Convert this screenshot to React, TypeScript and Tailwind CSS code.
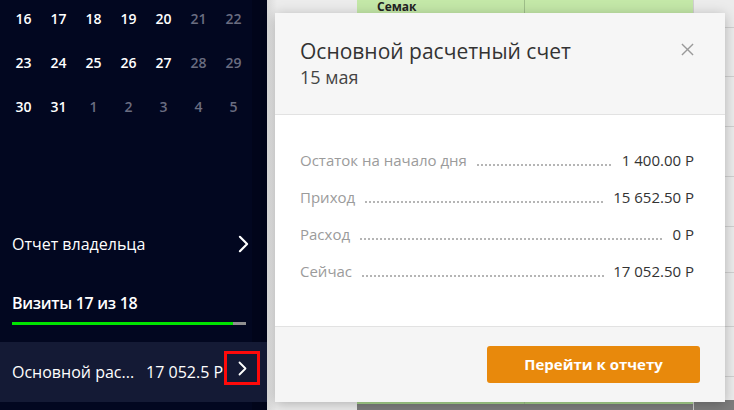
import React from "react";

const font = { fontFamily: '"Open Sans", "Noto Sans", sans-serif' };

const weeks: { d: number; muted?: boolean }[][] = [
  [{ d: 16 }, { d: 17 }, { d: 18 }, { d: 19 }, { d: 20 }, { d: 21, muted: true }, { d: 22, muted: true }],
  [{ d: 23 }, { d: 24 }, { d: 25 }, { d: 26 }, { d: 27 }, { d: 28, muted: true }, { d: 29, muted: true }],
  [{ d: 30 }, { d: 31 }, { d: 1, muted: true }, { d: 2, muted: true }, { d: 3, muted: true }, { d: 4, muted: true }, { d: 5, muted: true }],
];

const rows = [
  { label: "Остаток на начало дня", value: "1 400.00 Р" },
  { label: "Приход", value: "15 652.50 Р" },
  { label: "Расход", value: "0 Р" },
  { label: "Сейчас", value: "17 052.50 Р" },
];

const Chevron = ({ className }: { className?: string }) => (
  <svg viewBox="0 0 12 20" className={className} fill="none" stroke="currentColor" strokeWidth="2.4" strokeLinecap="round" strokeLinejoin="round">
    <path d="M2 2l8 8-8 8" />
  </svg>
);

const Sidebar = () => (
  <div className="w-[267px] h-full bg-[#020720] flex flex-col text-white relative">
    <div className="absolute right-0 top-0 bottom-0 w-[15px] bg-[#01051a]" />
    <div className="flex flex-col pt-[8px] pl-[6px]">
      {weeks.map((w, i) => (
        <div key={i} className="flex h-[44px]">
          {w.map((c, j) => (
            <div
              key={j}
              className={
                "w-[35px] text-center text-[14px] font-semibold leading-[22px] " +
                (c.muted ? "text-[#6a6d80]" : "text-white")
              }
            >
              {c.d}
            </div>
          ))}
        </div>
      ))}
    </div>

    <div className="flex-1" />

    <div className="flex items-center justify-between pl-[12px] pr-[18px] h-[40px] mb-[28px]">
      <span className="text-[16px] font-medium">Отчет владельца</span>
      <Chevron className="w-[11px] h-[18px]" />
    </div>

    <div className="pl-[12px] pr-[20px]">
      <div className="text-[16px] font-semibold leading-[22px] tracking-[-0.3px]">Визиты 17 из 18</div>
      <div className="flex h-[3px] mt-[8px] w-[234px]">
        <div className="w-[221px] bg-[#00e400]" />
        <div className="flex-1 bg-[#8f8f8f]" />
      </div>
    </div>

    <div className="mt-[17px] h-[60px] bg-[#141a35] flex items-center pl-[12px] mb-[8px] relative z-10">
      <span className="text-[16px] font-medium whitespace-nowrap">Основной рас...</span>
      <span className="text-[16px] font-medium whitespace-nowrap ml-[12px] w-[78px] overflow-hidden">17 052.5 Р</span>
      <div className="w-[36px] h-[34px] -mt-[8px] border-[3px] border-[#ff0a0a] flex items-center justify-center shrink-0">
        <Chevron className="w-[9px] h-[15px]" />
      </div>
    </div>
  </div>
);

const Background = () => (
  <div className="flex-1 h-full bg-[#ececec] relative overflow-hidden">
    <div className="absolute inset-y-0 left-0 w-[10px] bg-gradient-to-r from-[#d9d9d9] to-transparent" />
    <div className="ml-[90px] flex h-full">
      <div className="w-[336px] flex flex-col">
        <div className="h-[28px] bg-[#c4e8a8] border-b border-[#b3d29a] flex text-[12px] font-bold text-[#222] leading-[13px]">
          <div className="w-[168px] border-r border-[#9fbf8a] pl-[20px]">
            Семак
            <br />
            Сергей
          </div>
          <div className="flex-1" />
        </div>
        <div className="flex-1 flex">
          <div className="w-[168px] border-r border-[#d5d5d5] bg-[#f4f4f4]" />
          <div className="flex-1 bg-[#f4f4f4]" />
        </div>
        <div className="h-[4px] bg-[#a9d58e] flex">
          <div className="w-[168px] border-r border-[#9fbf8a]" />
        </div>
        <div className="h-[6px] bg-[#7d7d7d]" />
      </div>
      <div className="flex-1 flex flex-col bg-[#ececec] border-l border-[#d0d0d0]">
        <div className="h-[28px] border-b border-[#d0d0d0]" />
        <div className="h-[49px] border-b border-[#d0d0d0]" />
        <div className="h-[50px] border-b border-[#d0d0d0]" />
        <div className="h-[50px] border-b border-[#d0d0d0]" />
        <div className="h-[50px] border-b border-[#d0d0d0]" />
        <div className="h-[46px] border-b border-[#d0d0d0]" />
        <div className="h-[54px] border-b border-[#d0d0d0]" />
        <div className="h-[50px] border-b border-[#d0d0d0]" />
        <div className="flex-1 bg-[#7d7d7d] mt-[23px]" />
      </div>
    </div>
  </div>
);

const Modal = () => (
  <div className="absolute left-[275px] top-[13px] w-[450px] h-[389px] flex flex-col shadow-[0_2px_12px_rgba(0,0,0,0.25)] z-20">
    <div className="h-[102px] bg-[#f6f6f6] border-b border-[#e2e2e2] flex justify-between pl-[25px] pr-[31px] pt-[25px]">
      <div>
        <div className="text-[21px] leading-[27px] text-[#333]">Основной расчетный счет</div>
        <div className="text-[18px] leading-[24px] text-[#444]">15 мая</div>
      </div>
      <svg viewBox="0 0 14 14" className="w-[13px] h-[13px] mt-[5px]" stroke="#9a9a9a" strokeWidth="1.5">
        <path d="M1 1l12 12M13 1L1 13" />
      </svg>
    </div>
    <div className="h-[212px] bg-white border-b border-[#e2e2e2] pl-[25px] pr-[31px] pt-[35px] flex flex-col gap-[16px]">
      {rows.map((r) => (
        <div key={r.label} className="flex items-end h-[21px]">
          <span className="text-[15px] leading-[21px] text-[#9b9b9b] whitespace-nowrap">{r.label}</span>
          <span className="flex-1 mx-[9px] mb-[5px] h-[2px] bg-[radial-gradient(circle,#b5b5b5_0.9px,transparent_1.1px)] bg-[length:4px_2px] bg-repeat-x" />
          <span className="text-[15px] leading-[21px] text-[#333] whitespace-nowrap">{r.value}</span>
        </div>
      ))}
    </div>
    <div className="flex-1 bg-[#f5f5f5] flex justify-end items-start pt-[19px] pr-[25px]">
      <button className="w-[213px] h-[37px] bg-[#e8890c] rounded-[3px] text-white text-[15px] font-bold">
        Перейти к отчету
      </button>
    </div>
  </div>
);

export default function App() {
  return (
    <div className="w-[734px] h-[410px] flex relative overflow-hidden" style={font}>
      <Sidebar />
      <Background />
      <Modal />
    </div>
  );
}
